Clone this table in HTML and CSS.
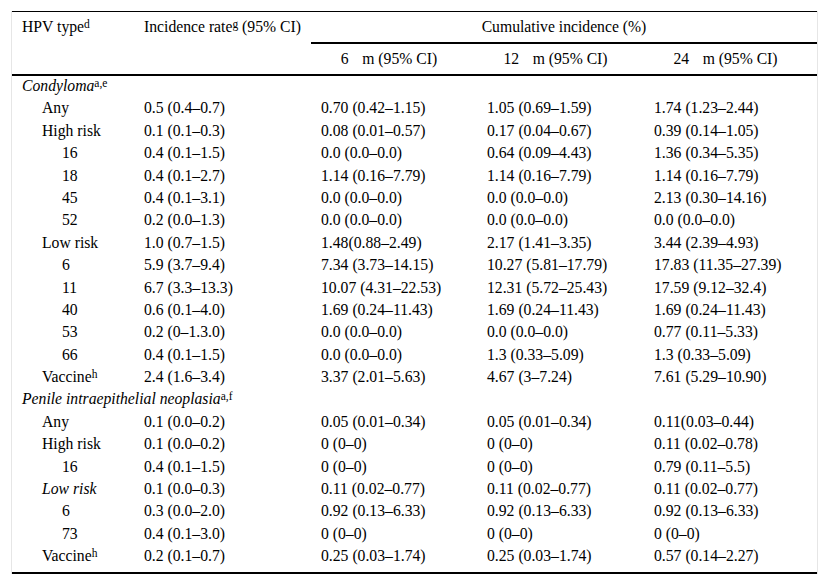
FILE: index.html
```html
<!DOCTYPE html>
<html lang="en">
<head>
<meta charset="utf-8">
<title>HPV incidence</title>
<link rel="stylesheet" href="styles.css">
</head>
<body>
<div class="wrap">
<table class="tbl">
  <colgroup>
    <col class="c1"><col class="c2"><col class="c3"><col class="c4"><col class="c5">
  </colgroup>
  <thead>
    <tr class="h1">
      <th class="left">HPV type<sup class="fn">d</sup></th>
      <th class="left">Incidence rate<sup class="fn">g</sup> (95% CI)</th>
      <th class="cum" colspan="3">Cumulative incidence (%)</th>
    </tr>
    <tr class="h2">
      <th></th>
      <th></th>
      <th class="per">6<span class="sp"></span>m (95% CI)</th>
      <th class="per">12<span class="sp"></span>m (95% CI)</th>
      <th class="per">24<span class="sp"></span>m (95% CI)</th>
    </tr>
  </thead>
  <tbody>
    <tr><td class="grp" colspan="5"><em>Condyloma</em><sup class="fn">a,e</sup></td></tr>
    <tr><td class="l1">Any</td><td>0.5 (0.4–0.7)</td><td>0.70 (0.42–1.15)</td><td>1.05 (0.69–1.59)</td><td>1.74 (1.23–2.44)</td></tr>
    <tr><td class="l1">High risk</td><td>0.1 (0.1–0.3)</td><td>0.08 (0.01–0.57)</td><td>0.17 (0.04–0.67)</td><td>0.39 (0.14–1.05)</td></tr>
    <tr><td class="l2">16</td><td>0.4 (0.1–1.5)</td><td>0.0 (0.0–0.0)</td><td>0.64 (0.09–4.43)</td><td>1.36 (0.34–5.35)</td></tr>
    <tr><td class="l2">18</td><td>0.4 (0.1–2.7)</td><td>1.14 (0.16–7.79)</td><td>1.14 (0.16–7.79)</td><td>1.14 (0.16–7.79)</td></tr>
    <tr><td class="l2">45</td><td>0.4 (0.1–3.1)</td><td>0.0 (0.0–0.0)</td><td>0.0 (0.0–0.0)</td><td>2.13 (0.30–14.16)</td></tr>
    <tr><td class="l2">52</td><td>0.2 (0.0–1.3)</td><td>0.0 (0.0–0.0)</td><td>0.0 (0.0–0.0)</td><td>0.0 (0.0–0.0)</td></tr>
    <tr><td class="l1">Low risk</td><td>1.0 (0.7–1.5)</td><td>1.48(0.88–2.49)</td><td>2.17 (1.41–3.35)</td><td>3.44 (2.39–4.93)</td></tr>
    <tr><td class="l2">6</td><td>5.9 (3.7–9.4)</td><td>7.34 (3.73–14.15)</td><td>10.27 (5.81–17.79)</td><td>17.83 (11.35–27.39)</td></tr>
    <tr><td class="l2">11</td><td>6.7 (3.3–13.3)</td><td>10.07 (4.31–22.53)</td><td>12.31 (5.72–25.43)</td><td>17.59 (9.12–32.4)</td></tr>
    <tr><td class="l2">40</td><td>0.6 (0.1–4.0)</td><td>1.69 (0.24–11.43)</td><td>1.69 (0.24–11.43)</td><td>1.69 (0.24–11.43)</td></tr>
    <tr><td class="l2">53</td><td>0.2 (0–1.3.0)</td><td>0.0 (0.0–0.0)</td><td>0.0 (0.0–0.0)</td><td>0.77 (0.11–5.33)</td></tr>
    <tr><td class="l2">66</td><td>0.4 (0.1–1.5)</td><td>0.0 (0.0–0.0)</td><td>1.3 (0.33–5.09)</td><td>1.3 (0.33–5.09)</td></tr>
    <tr><td class="l1">Vaccine<sup class="fn">h</sup></td><td>2.4 (1.6–3.4)</td><td>3.37 (2.01–5.63)</td><td>4.67 (3–7.24)</td><td>7.61 (5.29–10.90)</td></tr>
    <tr><td class="grp" colspan="5"><em>Penile intraepithelial neoplasia</em><sup class="fn">a,f</sup></td></tr>
    <tr><td class="l1">Any</td><td>0.1 (0.0–0.2)</td><td>0.05 (0.01–0.34)</td><td>0.05 (0.01–0.34)</td><td>0.11(0.03–0.44)</td></tr>
    <tr><td class="l1">High risk</td><td>0.1 (0.0–0.2)</td><td>0 (0–0)</td><td>0 (0–0)</td><td>0.11 (0.02–0.78)</td></tr>
    <tr><td class="l2">16</td><td>0.4 (0.1–1.5)</td><td>0 (0–0)</td><td>0 (0–0)</td><td>0.79 (0.11–5.5)</td></tr>
    <tr><td class="l1"><em>Low risk</em></td><td>0.1 (0.0–0.3)</td><td>0.11 (0.02–0.77)</td><td>0.11 (0.02–0.77)</td><td>0.11 (0.02–0.77)</td></tr>
    <tr><td class="l2">6</td><td>0.3 (0.0–2.0)</td><td>0.92 (0.13–6.33)</td><td>0.92 (0.13–6.33)</td><td>0.92 (0.13–6.33)</td></tr>
    <tr><td class="l2">73</td><td>0.4 (0.1–3.0)</td><td>0 (0–0)</td><td>0 (0–0)</td><td>0 (0–0)</td></tr>
    <tr class="last"><td class="l1">Vaccine<sup class="fn">h</sup></td><td>0.2 (0.1–0.7)</td><td>0.25 (0.03–1.74)</td><td>0.25 (0.03–1.74)</td><td>0.57 (0.14–2.27)</td></tr>
  </tbody>
</table>
</div>
</body>
</html>
```
FILE: styles.css
```css
html, body {
  margin: 0;
  padding: 0;
  background: #fff;
}

body {
  font-family: "Liberation Serif", "Times New Roman", serif;
  font-size: 15.7px;
  color: #000;
}

.wrap {
  margin: 11px 0 0 11px;
  width: 805px;
  border-left: 1px solid #e6e6e6;
  border-right: 1px solid #e6e6e6;
}

.tbl {
  width: 805px;
  table-layout: fixed;
  border-collapse: separate;
  border-spacing: 0;
  border-top: 1px solid #000;
  border-bottom: 2px solid #000;
}

.c1 { width: 122px; }
.c2 { width: 177px; }
.c3 { width: 166px; }
.c4 { width: 167px; }
.c5 { width: 173px; }

th {
  font-weight: normal;
  padding: 0 10px;
  line-height: 30px;
  white-space: nowrap;
}

th.left {
  text-align: left;
  vertical-align: top;
}

.h1 th.cum {
  text-align: center;
  border-bottom: 2px solid #000;
  padding: 0;
}

.h2 th {
  border-bottom: 2px solid #000;
}

.h2 th.per {
  text-align: center;
  padding: 0 10px 0 0;
}

.sp {
  display: inline-block;
  width: 13.5px;
}

td {
  padding: 0 10px 3.4px;
  line-height: 19px;
  white-space: nowrap;
  vertical-align: top;
}

td.grp { padding-left: 10px; }
td.l1 { padding-left: 30px; }
td.l2 { padding-left: 50px; }

.last td {
  padding-bottom: 7.1px;
}

.fn {
  font-family: "Liberation Serif", "Times New Roman", serif;
  font-size: 11.5px;
  font-style: normal;
  line-height: 0;
  vertical-align: 4px;
}
```
